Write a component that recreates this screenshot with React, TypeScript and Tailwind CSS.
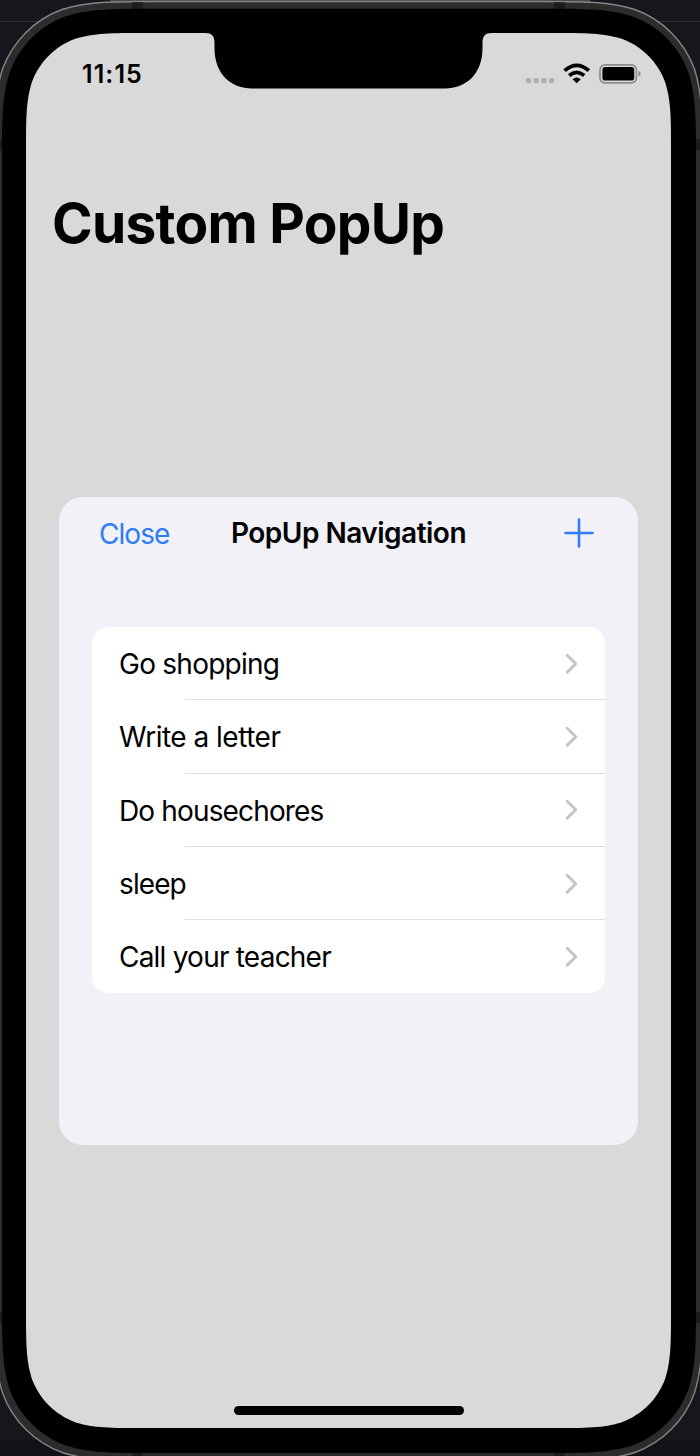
function corner(x: number, y: number, w: number, h: number, r: number) {
  const a = 1.528665 * r, b = 1.08849 * r, c = 0.868407 * r, d = 0.631494 * r;
  const e = 0.074911 * r, f = 0.372824 * r, g = 0.16906 * r;
  const X = x + w, Y = y + h;
  return `M${x + a} ${y}H${X - a}C${X - b} ${y} ${X - c} ${y} ${X - d} ${y + e}C${X - f} ${y + g} ${X - g} ${y + f} ${X - e} ${y + d}C${X} ${y + c} ${X} ${y + b} ${X} ${y + a}V${Y - a}C${X} ${Y - b} ${X} ${Y - c} ${X - e} ${Y - d}C${X - g} ${Y - f} ${X - f} ${Y - g} ${X - d} ${Y - e}C${X - c} ${Y} ${X - b} ${Y} ${X - a} ${Y}H${x + a}C${x + b} ${Y} ${x + c} ${Y} ${x + d} ${Y - e}C${x + f} ${Y - g} ${x + g} ${Y - f} ${x + e} ${Y - d}C${x} ${Y - c} ${x} ${Y - b} ${x} ${Y - a}V${y + a}C${x} ${y + b} ${x} ${y + c} ${x + e} ${y + d}C${x + g} ${y + f} ${x + f} ${y + g} ${x + d} ${y + e}C${x + c} ${y} ${x + b} ${y} ${x + a} ${y}Z`;
}

function DeviceBezel() {
  return (
    <svg className="absolute inset-0" width="700" height="1456" viewBox="0 0 700 1456" aria-hidden="true">
      <rect width="700" height="1456" fill="#18151c" />
      <path d="M0 21.5H700" stroke="#302d33" />
      <rect y="1440" width="700" height="16" fill="#141116" />
      <path d="M110 0H590V2H110Z" fill="#4a4a4a" />
      <path d={corner(-5.5, 1.5, 708, 1459, 107)} fill="#2c2c2c" stroke="#858585" strokeWidth="1.4" />
      <path d="M132 2.2h11v7h-11zM554 2.2h11v7h-11zM132 1453h11v3h-11zM554 1453h11v3h-11zM0 139h2v11H0zM696 139h4v11h-4zM0 1312h2v11H0zM696 1312h4v11h-4z" fill="#1c1c1c" />
      <path d={corner(2, 8.7, 694, 1444.3, 101)} fill="#000" />
      <path d={corner(26, 33, 645, 1395, 78)} fill="#d9d9d9" />
      <path d="M205 32.5V33C212 33 214.5 36 214.5 43V48C214.5 75 232 88.5 252 88.5H445C465 88.5 482.5 75 482.5 48V43C482.5 36 485 33 492 33V32.5Z" fill="#000" />
    </svg>
  );
}

function StatusIcons() {
  return (
    <svg width="116" height="24" viewBox="525 62 116 24" aria-hidden="true">
      <g fill="#b0b0b0">
        <rect x="525.8" y="78" width="5.2" height="5.2" rx="1.6" />
        <rect x="533.6" y="78" width="5.2" height="5.2" rx="1.6" />
        <rect x="541.3" y="78" width="5.2" height="5.2" rx="1.6" />
        <rect x="549" y="78" width="5.2" height="5.2" rx="1.6" />
      </g>
      <g fill="none" stroke="#000" strokeWidth="3.8">
        <path d="M564.6 70.6Q576.7 60.2 588.8 70.6" />
        <path d="M569.2 75.5Q576.7 69.3 584.2 75.5" />
      </g>
      <path d="M576.7 83.2L572.6 79.2Q576.7 76 580.8 79.2Z" />
      <rect x="600" y="64.9" width="36.4" height="17.9" rx="5" fill="none" stroke="#8c8c8c" strokeWidth="1.7" />
      <rect x="602.4" y="67" width="31.8" height="13.6" rx="2.8" />
      <path d="M638.5 70.8Q640.7 71.6 640.7 73.7T638.5 76.6Z" fill="#898989" />
    </svg>
  );
}

function Chevron() {
  return (
    <svg width="14" height="22" viewBox="0 0 14 22" fill="none" stroke="#c4c4c6" strokeWidth="2.9" strokeLinecap="round" strokeLinejoin="round" aria-hidden="true">
      <path d="M2.2 2.3L10.8 10.7L2.2 19.1" />
    </svg>
  );
}

const items = [
  { label: "Go shopping", tracking: "tracking-[-0.75px]" },
  { label: "Write a letter", tracking: "tracking-[-0.5px]" },
  { label: "Do housechores", tracking: "tracking-[-0.85px]" },
  { label: "sleep", tracking: "tracking-[-0.9px]" },
  { label: "Call your teacher", tracking: "tracking-[-0.78px]" },
];

export default function App() {
  return (
    <div className="relative h-[1456px] w-[700px] overflow-hidden bg-black font-['Inter',sans-serif] text-black">
      <DeviceBezel />
      <div className="relative ml-[26px] flex h-full w-[645px] flex-col pt-[33px]">
        <header className="flex h-[82px] items-center justify-between pr-[30px] pl-[56px]">
          <span className="pt-0.5 text-[25px] font-semibold tracking-[1.1px]">11:15</span>
          <StatusIcons />
        </header>
        <h1 className="mt-[74px] ml-[26px] h-[68px] text-[55px] leading-[68px] font-bold tracking-[-0.72px] whitespace-nowrap">Custom PopUp</h1>
        <section className="mt-[239.5px] ml-[33px] h-[648px] w-[579px] rounded-[24px] bg-[#f2f1f7] px-[33px]">
          <nav className="grid h-[73px] grid-cols-[1fr_auto_1fr] items-center">
            <button className="ml-[7px] pt-px text-left text-[28px] tracking-[-0.95px] text-[#2e7cf6]">Close</button>
            <h2 className="text-[28px] font-semibold tracking-[-0.5px]">PopUp Navigation</h2>
            <svg className="mr-[11px] justify-self-end" width="30" height="30" viewBox="0 0 30 30" stroke="#2e7cf6" strokeWidth="2.6" strokeLinecap="round">
              <path d="M15 1.5V28.5M1.5 15H28.5" />
            </svg>
          </nav>
          <ul className="mt-[57.5px] overflow-hidden rounded-[16px] bg-white pb-px">
            {items.map((item, i) => (
              <li key={item.label}>
                <div className="flex h-[72.3px] items-center justify-between pt-px pr-[26px] pl-[27px]">
                  <span className={`pt-px text-[28px] whitespace-nowrap ${item.tracking}`}>{item.label}</span>
                  <Chevron />
                </div>
                {i < items.length - 1 && <div className="ml-[93px] h-px bg-[#dedee0]" />}
              </li>
            ))}
          </ul>
        </section>
        <div className="mt-[261.5px] h-[9px] w-[230px] self-center rounded-full bg-black" />
      </div>
    </div>
  );
}
